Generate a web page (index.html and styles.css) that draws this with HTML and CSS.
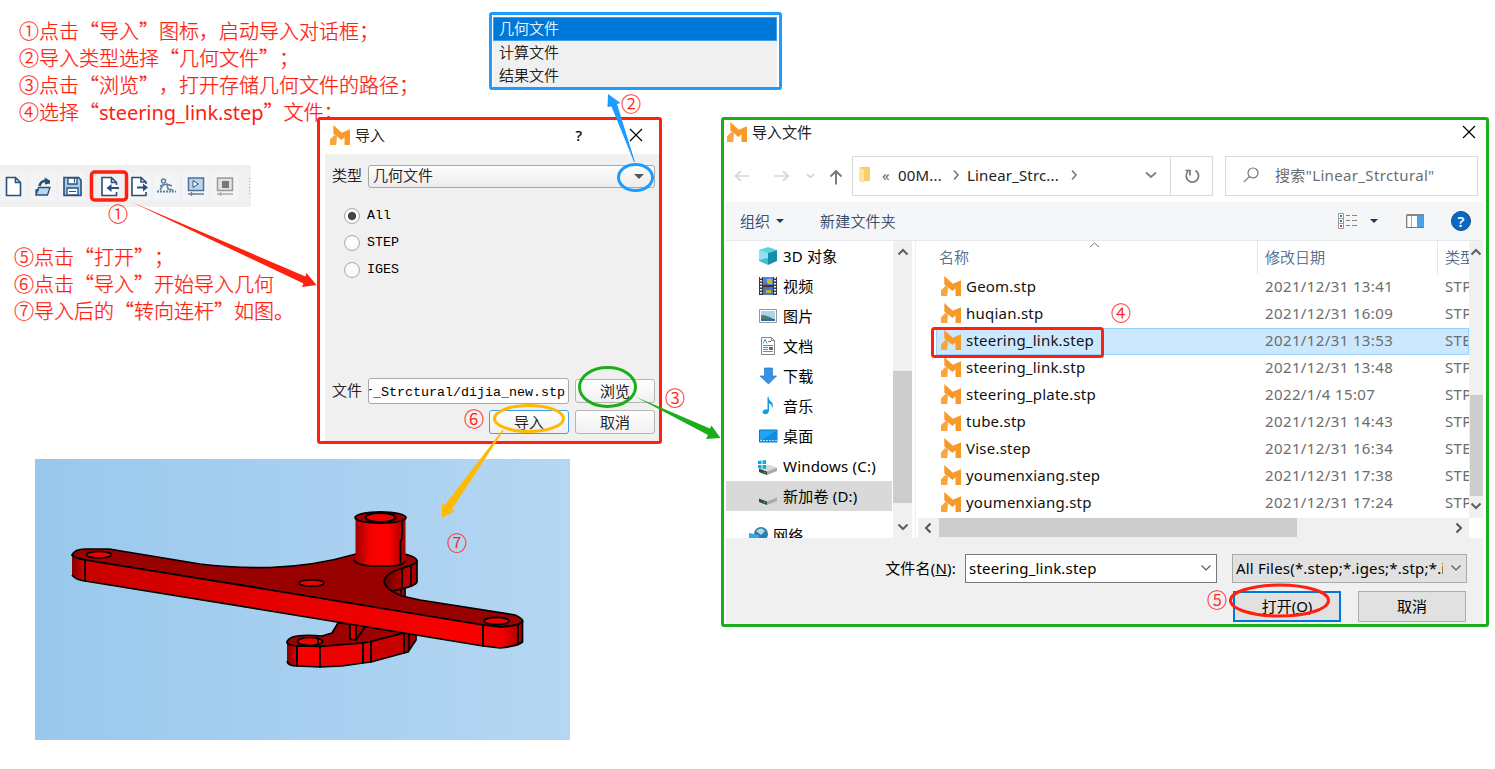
FILE: index.html
```
<!DOCTYPE html>
<html lang="zh-CN">
<head>
<meta charset="utf-8">
<title>导入几何文件</title>
<link rel="stylesheet" href="styles.css">
</head>
<body>
<svg width="0" height="0" class="defs">
  <symbol id="logo" viewBox="0 0 20 20"><path fill="#f89a2a" d="M3.300 0 11.800 7.700 20 4.300V20H14.500V12.300L11.500 15 3.300 8.600Z"/><path fill="#fba63c" d="M0 14.200 4.600 9.800 7 11.700 6.300 20H0Z"/></symbol>
  <symbol id="x" viewBox="0 0 14 14"><path d="M1 1 13 13M13 1 1 13" stroke="#000" stroke-width="1.2"/></symbol>
  <symbol id="up" viewBox="0 0 12 8"><path d="M1.500 6.500 6 2l4.500 4.500" fill="none" stroke="#606060" stroke-width="2"/></symbol>
  <symbol id="down" viewBox="0 0 12 8"><path d="M1.500 1.500 6 6l4.500-4.500" fill="none" stroke="#606060" stroke-width="2"/></symbol>
  <symbol id="thin-down" viewBox="0 0 12 8"><path d="M1.500 1.500 6 6l4.500-4.500" fill="none" stroke="#555" stroke-width="1.100"/></symbol>
  <symbol id="right" viewBox="0 0 8 12"><path d="M2 1.500 6 6l-4 4.500" fill="none" stroke="#777" stroke-width="1.600"/></symbol>
  <symbol id="disk" viewBox="0 0 20 20"><path d="M1 12.500 10 8.500 19 11.500 9 15.500Z" fill="#d6d8da"/><path d="M1 12.500 9 15.500V19L1 16Z" fill="#3c4246"/><path d="M9 15.500 19 11.500V15L9 19Z" fill="#a7abad"/><path d="M6 16.200l1.500.5" stroke="#38c047" stroke-width="1.300"/></symbol>
</svg>
<main class="board">
  <div class="note note-top">
    <p>①点击“导入”图标，启动导入对话框；</p>
    <p>②导入类型选择“几何文件”；</p>
    <p>③点击“浏览”，打开存储几何文件的路径；</p>
    <p>④选择“<span class="fname">steering_link.step</span>”文件；</p>
  </div>

  <div class="toolbar">
    <svg width="251" height="42" viewBox="0 165 251 42">
      <g fill="#f3f4f5"><path d="M0 173h27v27H0zM29 173h27v27H29zM58 173h27v27H58zM124 173h27v27H124zM153 173h27v27H153zM182 173h27v27H182zM211 173h28v27H211z"/></g>
      <g fill="#fff" stroke="#28507c" stroke-width="1.600">
        <path d="M6.500 177.500h9l5 5v13h-14zM15.500 177.500v5h5"/>
        <path d="M116.500 185v-2.500l-5-5h-9.500v18h14.500V192M111.500 177.500v5h5"/>
        <path d="M146 184v-2l-5-4.500h-9v18h14V192M141 177.500v4.500h5"/>
        <path fill="#b5d7f0" stroke-width="1.300" d="M38.500 187.500H50l-2.500 7.500H36zM36 195v-5h3"/>
        <path fill="none" stroke-width="2.600" d="M39.500 186q1-5 6.500-5.500"/>
        <path fill="#28507c" stroke="none" d="M44.500 177.500 50 180.500v3l-5 1z"/>
        <path fill="#a5cde9" d="M64 177.500h14.500l2.500 2.500v15.500H64z"/>
        <path stroke-width="1.300" d="M68 178h9v6h-9zM67 188h11v7H67z"/><path stroke-width="1.200" d="M74.500 178.500v4M69 191.500h7"/>
      </g>
      <path d="M110 188h9M137 187.500h8" stroke="#28507c" stroke-width="2"/><path d="M111.500 184v8l-5-4zM143 183.500v8l5-4z" fill="#28507c"/>
      <path d="M157 191.500h19" stroke="#5c7fa4" stroke-width="2" stroke-dasharray="2 1"/>
      <g fill="none" stroke="#5c7fa4" stroke-width="1.500"><circle cx="163.500" cy="181" r="2"/><path d="M160 190l3-5 4-1 5 2M167 184l1 5 5 1M160 186l3-1"/></g>
      <path fill="#b9d8ef" stroke="#4f7194" stroke-width="1.500" d="M188.500 178h15v12.500h-15z"/><path fill="#fff" stroke="#28507c" d="M193 180.500v7l5.500-3.500z"/><path d="M188 194h16M191.500 192v4" stroke="#5c7fa4" stroke-width="1.300"/>
      <path fill="#e2e2e2" stroke="#999" stroke-width="1.500" d="M217.500 178h15v12.500h-15z"/><path fill="#777" d="M222 181h7v7h-7z"/><path d="M217 194h16M220.500 192v4" stroke="#aaa" stroke-width="1.300"/>
      <path d="M249.500 178v18" stroke="#aaa" stroke-dasharray="1 2"/>
    </svg>
  </div>

  <div class="note note-left">
    <p>⑤点击“打开”；</p>
    <p>⑥点击“导入”开始导入几何</p>
    <p>⑦导入后的“转向连杆”如图。</p>
  </div>

  <ul class="popup">
    <li class="active">几何文件</li><li>计算文件</li><li>结果文件</li>
  </ul>

  <section class="import-dialog">
    <header><svg class="logo"><use href="#logo"/></svg><span>导入</span><b>?</b><svg class="close"><use href="#x"/></svg></header>
    <div class="import-body">
      <div class="type-row"><label>类型</label><div class="combo">几何文件<i></i></div></div>
      <div class="radios">
        <div><i class="radio on"></i>All</div><div><i class="radio"></i>STEP</div><div><i class="radio"></i>IGES</div>
      </div>
      <div class="file-row"><label>文件</label><div class="path"><span>r_Strctural/dijia_new.stp</span></div><button>浏览</button></div>
      <div class="actions"><button class="primary">导入</button><button>取消</button></div>
    </div>
  </section>

  <section class="file-dialog">
    <header><svg class="logo"><use href="#logo"/></svg><span>导入文件</span><svg class="close"><use href="#x"/></svg></header>
    <nav class="address">
      <svg class="arrows" viewBox="0 0 126 40" fill="none">
        <path d="M9.500 20H23M15 15l-5.500 5 5.500 5M48 20h14M57 15l5.500 5-5.500 5" stroke="#d8d8d8" stroke-width="1.700"/>
        <path d="M81 18l3.500 3.500L88 18" stroke="#d0d0d0" stroke-width="1.500"/>
        <path d="M110 28.500V15M104.500 20.500 110 15l5.500 5.500" stroke="#777" stroke-width="1.900"/>
      </svg>
      <div class="crumbs">
        <svg class="folder" viewBox="0 0 14 18"><path d="M2 1h10v14H2z" fill="#f5cf69"/><path d="M1 1l5 3v13l-5-2z" fill="#ffe49b"/></svg>
        <span class="laquo">«</span><span class="c1">00M...</span><svg class="chev"><use href="#right"/></svg><span class="c2">Linear_Strc...</span><svg class="chev"><use href="#right"/></svg>
        <svg class="drop" viewBox="0 0 12 8"><path d="M1 1.500 6 6l5-4.500" fill="none" stroke="#808080" stroke-width="1.800"/></svg>
      </div>
      <div class="refresh"><svg viewBox="0 0 16 16"><path d="M11.500 2.500A6.200 6.200 0 1 1 4 3.500M1.500 2.500H6v5" fill="none" stroke="#777" stroke-width="1.700"/></svg></div>
      <div class="search"><svg viewBox="0 0 16 16"><path d="M6.300 9.700.8 15.200" stroke="#777" stroke-width="1.200"/><circle cx="10" cy="6" r="5" fill="none" stroke="#777" stroke-width="1.200"/></svg><span>搜索"Linear_Strctural"</span></div>
    </nav>
    <div class="commands">
      <span>组织</span><i class="tri"></i><span class="newf">新建文件夹</span>
      <svg class="tools" viewBox="0 0 134 30">
        <path d="M.5 7.500h5v15h-5zM.5 12.500h5M.5 17.500h5" fill="#fff" stroke="#999"/><path d="M8 9.500h4m2 0h5M8 14.500h4m2 0h5M8 19.500h4m2 0h5" stroke="#858585"/><path d="M2 9h2v2H2z" fill="#27877c"/><path d="M2 14h2v2H2z" fill="#27877c"/><path d="M2 19h2v2H2z" fill="#d44427"/>
        <path d="M32 13h8l-4 4z" fill="#1e395b"/>
        <path d="M68.700 9h16.600v12.500H68.700z" fill="#fff" stroke="#777" stroke-width="1.200"/><path d="M69 8h17v2H69z" fill="#888"/><path d="M79 10h6.500v11H79z" fill="#4aa1e8"/><path d="M73.500 10v11" stroke="#aaa"/>
        <circle cx="123" cy="15" r="9.500" fill="#0869c5" stroke="#174a7d"/><text x="123" y="20.500" text-anchor="middle" fill="#fff" font-size="15" font-weight="600">?</text>
      </svg>
    </div>
    <div class="browser">
      <div class="tree">
        <div><svg viewBox="0 0 20 20"><path d="M1 4 10 1l9 3-9 3z" fill="#60d0e4"/><path d="M1 4l9 3v12l-9-4z" fill="#42bdd6"/><path d="M10 7l9-3v11l-9 4z" fill="#138fab"/><path d="M1 4l9 3v5l-9 2z" fill="#8de4f0"/></svg>3D 对象</div>
        <div><svg viewBox="0 0 20 20"><path d="M1 1h18v18H1z" fill="#39393b"/><path d="M5 1h10v8H5z" fill="#4d89dd"/><path d="M5 11h10v8H5z" fill="#3c79cf"/><path d="M3 1v18M17 1v18" stroke="#fff" stroke-width="2" stroke-dasharray="1.500 1.500"/><path d="M9 3h5v5H9z" fill="#ddb325"/><path d="M6 7h4l-2 3z" fill="#cf372f"/><path d="M8 14h5v3H8z" fill="#d9a824"/></svg>视频</div>
        <div><svg viewBox="0 0 20 20"><path d="M1.500 3.500h17v13h-17z" fill="#fff" stroke="#999"/><path d="M3 5h14v10H3z" fill="#abd4f1"/><path d="M3 9q7 0 14 5v1H3z" fill="#487f73"/><path d="M3 13h14v2H3z" fill="#3269a1"/></svg>图片</div>
        <div><svg viewBox="0 0 20 20"><path d="M3.500 1.500h10l3 3v14h-13z" fill="#fff" stroke="#888"/><path d="M13.500 1.500v3h3" fill="none" stroke="#888"/><path d="M5 7.500l2-4 2 4M10 5.500h3M5 9.500h10M5 11.500h5M5 13.500h5M5 15.500h10" fill="none" stroke="#4496c7"/><path d="M11 11h4v3h-4z" fill="#4a7395"/></svg>文档</div>
        <div><svg viewBox="0 0 20 20"><path d="M6.500 2h8v8h4L10.500 18 2 10h4.500z" fill="#3692e2" stroke="#2279c4" stroke-width=".7"/></svg>下载</div>
        <div><svg viewBox="0 0 20 20"><path d="M10.500 1q.3 3 3 5 2.500 2.500.5 6 0-4-3-4.500V15q-1 4-5 3-3-2 .3-4.300 1.700-.9 3.200-.3V1z" fill="#129be9"/></svg>音乐</div>
        <div><svg viewBox="0 0 20 20"><path d="M1.500 4h17.500v12H1.500z" fill="#22a4f5" stroke="#087ac4"/><path d="M2 15l16-10v10z" fill="#118bea"/><path d="M2 14.500h17" stroke="#a9e1ff" stroke-dasharray="2 1"/></svg>桌面</div>
        <div><svg viewBox="0 0 20 20"><use href="#disk"/><path d="M0 5l3.500-.5V8H0zM4.500 4.400 8 4v4H4.500zM0 9h3.500v3.500L0 12zM4.500 9H8v4l-3.500-.4z" fill="#00aef0"/></svg>Windows (C:)</div>
        <div class="selected"><svg><use href="#disk"/></svg>新加卷 (D:)</div>
        <div class="network"><svg viewBox="0 0 20 20"><circle cx="13" cy="9" r="7" fill="#2c7dad"/><path d="M8 6q5-5 9 0l-4 4z" fill="#b3d8df"/><path d="M1 8l10 2v9l-10-3z" fill="#35a8e1"/></svg>网络</div>
      </div>
      <div class="vbar"><svg><use href="#up"/></svg><i></i><svg><use href="#down"/></svg></div>
      <div class="listing">
        <div class="list-main">
          <div class="table">
            <div class="tr head"><span>名称<svg class="sort"><path d="M1 6l4.500-4L10 6" fill="none" stroke="#777"/></svg></span><span>修改日期</span><span>类型</span></div>
            <div class="tr"><span><svg><use href="#logo"/></svg>Geom.stp</span><span>2021/12/31 13:41</span><span>STP</span></div>
            <div class="tr"><span><svg><use href="#logo"/></svg>huqian.stp</span><span>2021/12/31 16:09</span><span>STP</span></div>
            <div class="tr picked"><span><svg><use href="#logo"/></svg>steering_link.step</span><span>2021/12/31 13:53</span><span>STEP</span></div>
            <div class="tr"><span><svg><use href="#logo"/></svg>steering_link.stp</span><span>2021/12/31 13:48</span><span>STP</span></div>
            <div class="tr"><span><svg><use href="#logo"/></svg>steering_plate.stp</span><span>2022/1/4 15:07</span><span>STP</span></div>
            <div class="tr"><span><svg><use href="#logo"/></svg>tube.stp</span><span>2021/12/31 14:43</span><span>STP</span></div>
            <div class="tr"><span><svg><use href="#logo"/></svg>Vise.step</span><span>2021/12/31 16:34</span><span>STEP</span></div>
            <div class="tr"><span><svg><use href="#logo"/></svg>youmenxiang.step</span><span>2021/12/31 17:38</span><span>STEP</span></div>
            <div class="tr"><span><svg><use href="#logo"/></svg>youmenxiang.stp</span><span>2021/12/31 17:24</span><span>STP</span></div>
          </div>
          <div class="vbar2"><svg><use href="#up"/></svg><i></i><svg><use href="#down"/></svg></div>
        </div>
        <div class="hbar"><svg viewBox="0 0 8 12"><path d="M6.500 1.500 2 6l4.500 4.500" fill="none" stroke="#505050" stroke-width="1.900"/></svg><i></i><svg viewBox="0 0 8 12"><path d="M1.500 1.500 6 6l-4.500 4.500" fill="none" stroke="#505050" stroke-width="1.900"/></svg></div>
      </div>
    </div>
    <footer>
      <div class="name-row"><label>文件名(<u>N</u>):</label><div class="name-box"><span>steering_link.step</span><svg><use href="#thin-down"/></svg></div><div class="filter"><span>All Files(*.step;*.iges;*.stp;*.igs)</span><svg><use href="#thin-down"/></svg></div></div>
      <div class="ok-row"><button class="open">打开(<u>O</u>)</button><button>取消</button></div>
    </footer>
  </section>

  <svg class="model" viewBox="35 459 535 281">
    <defs>
      <linearGradient id="sky"><stop stop-color="#99c8ec"/><stop offset=".5" stop-color="#a7cff0"/><stop offset="1" stop-color="#b5d7f2"/></linearGradient>
      <linearGradient id="face"><stop stop-color="#c80000"/><stop offset=".5" stop-color="#e60000"/><stop offset="1" stop-color="#fa0000"/></linearGradient>
      <linearGradient id="cyl"><stop stop-color="#a00000"/><stop offset=".3" stop-color="#f40000"/><stop offset=".65" stop-color="#ff0000"/><stop offset="1" stop-color="#9c0000"/></linearGradient>
      <linearGradient id="capl"><stop stop-color="#850000"/><stop offset="1" stop-color="#d80000"/></linearGradient>
      <linearGradient id="capr"><stop stop-color="#f40000"/><stop offset=".5" stop-color="#f00000"/><stop offset="1" stop-color="#a00000"/></linearGradient>
      <linearGradient id="lobe"><stop stop-color="#650000"/><stop offset=".7" stop-color="#c00000"/><stop offset="1" stop-color="#a00000"/></linearGradient>
    </defs>
    <path d="M35 459h535v281H35z" fill="url(#sky)"/>
    <g stroke="#000" stroke-width="1.700" stroke-linejoin="round">
      <path d="M338 623 332 633 322 636 Q289 633 287 642 Q287 646 297 646 L320 646.500 363 643 372 641.500 416 630Z" fill="#9d0000"/>
      <path d="M287 642V661Q288 666 297 666V646Q287 645 287 642Z" fill="url(#capl)" stroke="none"/>
      <path d="M287 661Q288 666 297 666V646Q287 645 287 642" fill="none"/>
      <path d="M297 646 320 646.500V667L297 666Z" fill="#f90000"/>
      <path d="M320 646.500 363 643V663L342 666 320 667Z" fill="#ed0000"/>
      <path d="M363 643 371 641.500V662L363 663Z" fill="#e20000"/>
      <path d="M371 641.500 404 633V653L371 662Z" fill="#c90000"/>
      <path d="M404 630 416 633V640L408 652 404 653Z" fill="#a00000"/><path d="M409 633V650"/>
      <path d="M350 623V639L356 640 365 627 356 623Z" fill="#a80000"/><path d="M350 623V639L356 640V623Z" fill="#dd0000"/>
      <ellipse cx="310" cy="641.500" rx="12.500" ry="4" fill="#ed0000"/><path d="M318 639V644"/>
      <path d="M396 588 405 586V598L393 592Z" fill="#b40000"/><path d="M401 588V596"/>
      <path d="M384 581Q386 571 403 568Q416 564 417 561V582Q416 586 397 590L387 593Z" fill="url(#lobe)"/>
      <path d="M402 569V588M411 566V586"/>
      <path d="M72 555Q75 549 85 549H109L200 564Q233 568 270 567.500Q315 566 356 554H405Q417 557 417 561Q417 564 402 568Q384 574 384 582Q386 590 402 596L420 600 515 615Q524 619 522.500 622Q518 626 500 627L483 625 270 590 85 560Q73 558 72 555Z" fill="#990000"/>
      <path d="M85 560 270 590 483 625V646L270 611 85 581Z" fill="url(#face)"/>
      <path d="M72 555V576Q76 580 85 581V560Q74 558 72 555Z" fill="url(#capl)" stroke="none"/>
      <path d="M72 575Q76 580 85 581V560Q74 558 72 555" fill="none"/>
      <path d="M483 625 500 627Q518 626 522.500 622V642Q518 646 500 648L483 646Z" fill="url(#capr)"/><path d="M518 625V644"/>
      <path d="M355.500 517V561Q357 565 372 566H390Q402 566 405.500 561V517Z" fill="url(#cyl)" stroke="none"/>
      <path d="M354 560Q356 565 372 566H390Q402 566 406 561M402 520V539L400.500 541V563" fill="none"/>
      <ellipse cx="380.500" cy="517.500" rx="25.500" ry="5.700" fill="#9b0000"/>
      <ellipse cx="380.500" cy="517.500" rx="15" ry="4.500" fill="#e90000" stroke-width="2"/>
      <ellipse cx="99" cy="554.700" rx="12.500" ry="3.200" fill="#ed0000"/>
      <ellipse cx="311.500" cy="583" rx="12.500" ry="3.200" fill="#ed0000"/>
      <ellipse cx="496.500" cy="621" rx="12.500" ry="3.700" fill="#ed0000"/>
    </g>
  </svg>

  <svg class="marks" viewBox="0 0 1495 769">
    <g fill="none" stroke-width="3">
      <rect x="91.500" y="172" width="35" height="28" rx="3" stroke="#ff2010" stroke-width="3.500"/>
      <rect x="932.500" y="328.500" width="170" height="28" rx="2" stroke="#ff2010"/>
      <ellipse cx="635.500" cy="177.500" rx="17" ry="13" stroke="#1e9bff"/>
      <ellipse cx="607.500" cy="387" rx="28" ry="19.500" stroke="#1cad1c"/>
      <ellipse cx="529" cy="418.500" rx="34.500" ry="13" stroke="#ffb900"/>
      <ellipse cx="1279.500" cy="600.500" rx="49" ry="15.500" stroke="#ff2010"/>
    </g>
    <path fill="#ff2010" d="M131.500 202 305.500 276.500 306.500 273 316.500 285 302 287 303.500 283.500Z"/>
    <path fill="#1e9bff" d="M608 94 620.500 103 617 104 635 162 634 162 611.500 106.500 607.500 107Z"/>
    <path fill="#1cad1c" d="M636 397 710 428.500 711.500 425.500 720.500 438 706 439 708 435Z"/>
    <path fill="#ffb900" d="M504 430 451.500 509.500 455 511 442 517.500 442 503 444.500 505.500 502.500 430Z"/>
    <g class="nums"><text x="108" y="221.500">①</text><text x="621" y="111.500">②</text><text x="665" y="405.500">③</text><text x="1111" y="320.500">④</text><text x="1207" y="608">⑤</text><text x="464" y="426.500">⑥</text><text x="447" y="550.500">⑦</text></g>
  </svg>
</main>
</body>
</html>
```
FILE: styles.css
```
* { box-sizing: border-box; }
body { margin: 0; background: #fff; overflow: hidden; }
svg { display: block; flex: none; }
p, ul { margin: 0; padding: 0; list-style: none; }
.defs { position: absolute; }
.board { position: relative; width: 1495px; height: 769px; overflow: hidden; font: 300 15px/20px "Noto Sans", "Noto Sans CJK SC", sans-serif; color: #000; text-spacing-trim: space-all; }

/* Items placed on the free board */
.note, .toolbar, .popup, .import-dialog, .file-dialog, .model, .marks { position: absolute; }

.note { color: #ff2010; font: 300 20px/27px "Noto Sans CJK SC", sans-serif; white-space: nowrap; -webkit-text-stroke: .25px #ff2010; }
.note-top { left: 19px; top: 17px; }
.note-left { left: 14px; top: 243px; }
.fname { font: 400 20px/20px "Noto Sans", sans-serif; -webkit-text-stroke: 0; letter-spacing: -.05px; }

.toolbar { left: 0; top: 165px; width: 251px; height: 42px; background: #f0f0f0; }

.popup { left: 489px; top: 12px; width: 293px; height: 78px; border: 3px solid #1e9bff; border-radius: 3px; padding: 2px 2px 0 1px; background: #fff; font-family: "Noto Sans CJK SC", sans-serif; -webkit-text-stroke: .2px; }
.popup li { height: 23px; padding-left: 6px; line-height: 22px; background: #f0f0f0; }
.popup .active { height: 24px; padding-left: 5px; line-height: 20px; background: #0078d7; border: 1px solid #3aa0f0; border-top-color: #888; color: #fff; }

.import-dialog { left: 317px; top: 117px; width: 345px; height: 327px; border: 3px solid #ff2010; border-radius: 3px; background: #fff; padding-left: 5px; font-family: "Liberation Mono", "Noto Sans CJK SC", monospace; -webkit-text-stroke: .2px; }
.import-dialog header { display: flex; align-items: center; height: 34px; padding: 0 16px 4px 5px; font: 400 15px/20px "Noto Sans", "Noto Sans CJK SC", sans-serif; }
.logo { width: 20px; height: 20px; }
.import-dialog header span { margin-left: 5px; flex: 1; font-weight: 300; }
.import-dialog header b { font-weight: 400; margin-right: 47px; }
.close { width: 14px; height: 14px; }
.import-body { height: 287px; background: #f0f0f0; padding: 11px 4px 0 7px; }
.type-row, .file-row { display: flex; align-items: center; }
.import-body label { width: 36px; flex: none; padding-top: 3px; }
.combo { position: relative; flex: 1; height: 23px; border: 1px solid #a8a8a8; border-radius: 3px; background: linear-gradient(#fdfdfd, #ececec); padding-left: 4px; line-height: 24px; }
.combo i { position: absolute; right: 10px; top: 8px; border: 5px solid transparent; border-top-color: #555; border-bottom: 0; }
.radios { display: flex; flex-direction: column; gap: 7px; padding: 18px 0 0 12px; font-size: 13.33px; line-height: 22px; -webkit-text-stroke: 0; }
.radios div { display: flex; align-items: center; gap: 7px; height: 20px; }
.radio { width: 16px; height: 16px; border: 1px solid #aaa; border-radius: 50%; background: radial-gradient(#fff, #f5f5f5); }
.radio.on { background: radial-gradient(circle, #444 0 3.700px, #fcfcfc 4.500px); }
.file-row { margin-top: 98px; }
.path { width: 201px; height: 26px; border: 1px solid #a8a8a8; border-radius: 3px; background: #fff; display: flex; justify-content: flex-end; align-items: center; overflow: hidden; padding: 3px 3px 0 0; font-size: 13.330px; -webkit-text-stroke: 0; }
.path span { white-space: nowrap; width: 196px; display: flex; justify-content: flex-end; overflow: hidden; }
.import-body button { width: 80px; height: 24px; border: 1px solid #b5b5b5; border-radius: 3px; background: linear-gradient(#fff, #f0f0f0); font: 300 15px/20px "Noto Sans CJK SC", sans-serif; padding: 0; color: #000; -webkit-text-stroke: .2px; }
.file-row button { margin-left: 6px; }
.actions { display: flex; justify-content: flex-end; gap: 6px; margin-top: 6px; }
.import-body .primary { border-color: #3aa0ee; }

.file-dialog { left: 721px; top: 117px; width: 768px; height: 510px; border: 3px solid #1cad1c; border-radius: 3px; background: #fff; padding: 0 3px 0 2px; }
.file-dialog header { display: flex; align-items: center; height: 25px; padding: 0 7px 1px 1px; }
.file-dialog header span { flex: 1; margin-left: 5px; font-weight: 300; -webkit-text-stroke: .25px; }
.address { display: flex; height: 40px; margin-top: 11px; padding-right: 5px; letter-spacing: .17px; }
.arrows { width: 126px; height: 40px; }
.crumbs { width: 319px; border: 1px solid #d9d9d9; display: flex; align-items: center; padding: 0 13px 2px 5px; color: #222; font-weight: 400; }
.folder { width: 14px; height: 18px; }
.laquo { margin-left: 10px; width: 16px; color: #666; }
.c1 { width: 50px; }
.c2 { width: 99px; }
.chev { width: 8px; height: 12px; margin: 0 7px 0 4px; }
.drop { width: 12px; height: 8px; margin-left: auto; }
.refresh { width: 42px; border: 1px solid #d9d9d9; border-left: 0; display: grid; place-items: center; }
.refresh svg, .search svg { width: 16px; height: 16px; }
.search { margin-left: 12px; width: 253px; border: 1px solid #d9d9d9; display: flex; align-items: center; gap: 16px; padding: 0 0 2px 17px; color: #6d6d6d; font-weight: 400; letter-spacing: .35px; }
.commands { display: flex; align-items: center; height: 39px; margin-top: 6px; padding-left: 14px; background: #f4f6f8; border-bottom: 1px solid #e5e8ea; color: #1e395b; -webkit-text-stroke: .2px; }
.tri { margin-left: 6px; border: 4px solid transparent; border-top-color: #1e395b; border-bottom: 0; }
.newf { margin-left: 36px; letter-spacing: .2px; }
.tools { width: 134px; height: 30px; margin-left: auto; margin-right: 11px; -webkit-text-stroke: 0; }
.browser { display: flex; height: 297px; overflow: hidden; }
.tree { width: 167px; overflow: hidden; font-weight: 400; letter-spacing: .2px; }
.tree div { display: flex; align-items: center; height: 30px; padding-left: 32px; gap: 5px; white-space: nowrap; }
.tree svg { width: 20px; height: 20px; }
.tree .selected { background: #d9d9d9; margin-right: 1px; }
.tree .network { margin-top: 9px; padding-left: 22px; }
.vbar { width: 19px; background: #f0f0f0; display: flex; flex-direction: column; align-items: center; padding: 7px 0; }
.vbar i { width: 19px; height: 132px; background: #cdcdcd; margin: 115px 0 20px; }
.vbar svg, .vbar2 svg { width: 12px; height: 8px; }
.listing { margin-left: 3px; border-left: 1px solid #eee; width: 568px; padding-left: 2px; }
.list-main { display: flex; height: 277px; overflow: hidden; }
.table { width: 551px; padding-left: 18px; overflow: hidden; }
.tr { display: grid; grid-template-columns: 321px 180px 60px; height: 27px; align-items: center; white-space: nowrap; color: #6d6d6d; font-weight: 400; letter-spacing: .38px; }
.tr span { display: flex; align-items: center; padding: 0 0 3px 8px; }
.tr span:first-child { color: #111; gap: 5px; padding-left: 5px; letter-spacing: .22px; }
.tr svg { width: 20px; height: 20px; }
.tr.head { height: 33px; align-items: stretch; font-weight: 300; letter-spacing: 0; -webkit-text-stroke: .2px; }
.tr.head span { color: #46607f; padding-bottom: 2px; }
.tr.head span:first-child { color: #46607f; padding-left: 3px; letter-spacing: 0; }
.tr.head span + span { border-left: 1px solid #e5e5e5; padding-left: 7px; }
.tr .sort { width: 11px; height: 8px; align-self: flex-start; margin-left: 115px; }
.tr.picked { background: #cce8ff; outline: 1px solid #99d1ff; outline-offset: -1px; }
.vbar2 { width: 14px; background: #f0f0f0; display: flex; flex-direction: column; align-items: center; padding: 7px 0 7px; }
.vbar2 i { width: 13px; height: 101px; background: #cdcdcd; margin: 139px 0 6px; }
.hbar { width: 551px; height: 20px; background: #f0f0f0; display: flex; align-items: center; padding: 0 6px 1px; }
.hbar svg { width: 8px; height: 12px; }
.hbar i { width: 358px; height: 19px; margin: 0 auto 0 7px; background: #cdcdcd; }
.file-dialog footer { height: 86px; background: #f0f0f0; padding-top: 16px; font-weight: 400; letter-spacing: .2px; }
.name-row { display: flex; align-items: center; }
.name-row label { width: 239px; text-align: right; padding: 0 9px 2px 0; }
.name-box, .filter { display: flex; align-items: center; height: 29px; border: 1px solid #777; background: #fff; padding: 0 4px 2px 3px; }
.name-box { width: 252px; justify-content: space-between; }
.filter { width: 235px; margin-left: 15px; background: #e1e1e1; border-color: #aaa; justify-content: space-between; }
.filter span { width: 207px; overflow: hidden; white-space: nowrap; }
.name-box svg, .filter svg { width: 12px; height: 8px; }
.ok-row { display: flex; justify-content: flex-end; gap: 17px; padding: 8px 17px 0 0; }
.ok-row button { width: 108px; height: 31px; padding: 0 0 2px; border: 1px solid #adadad; background: #e1e1e1; font: 400 15px/20px "Noto Sans", "Noto Sans CJK SC", sans-serif; color: #000; }
.ok-row .open { border: 2px solid #0078d7; }

.model { left: 35px; top: 459px; width: 535px; height: 281px; }
.marks { left: 0; top: 0; width: 1495px; height: 769px; pointer-events: none; }
.nums { fill: #ff2010; font: 300 20px "Noto Sans CJK SC", sans-serif; stroke: #ff2010; stroke-width: .25px; }
```
